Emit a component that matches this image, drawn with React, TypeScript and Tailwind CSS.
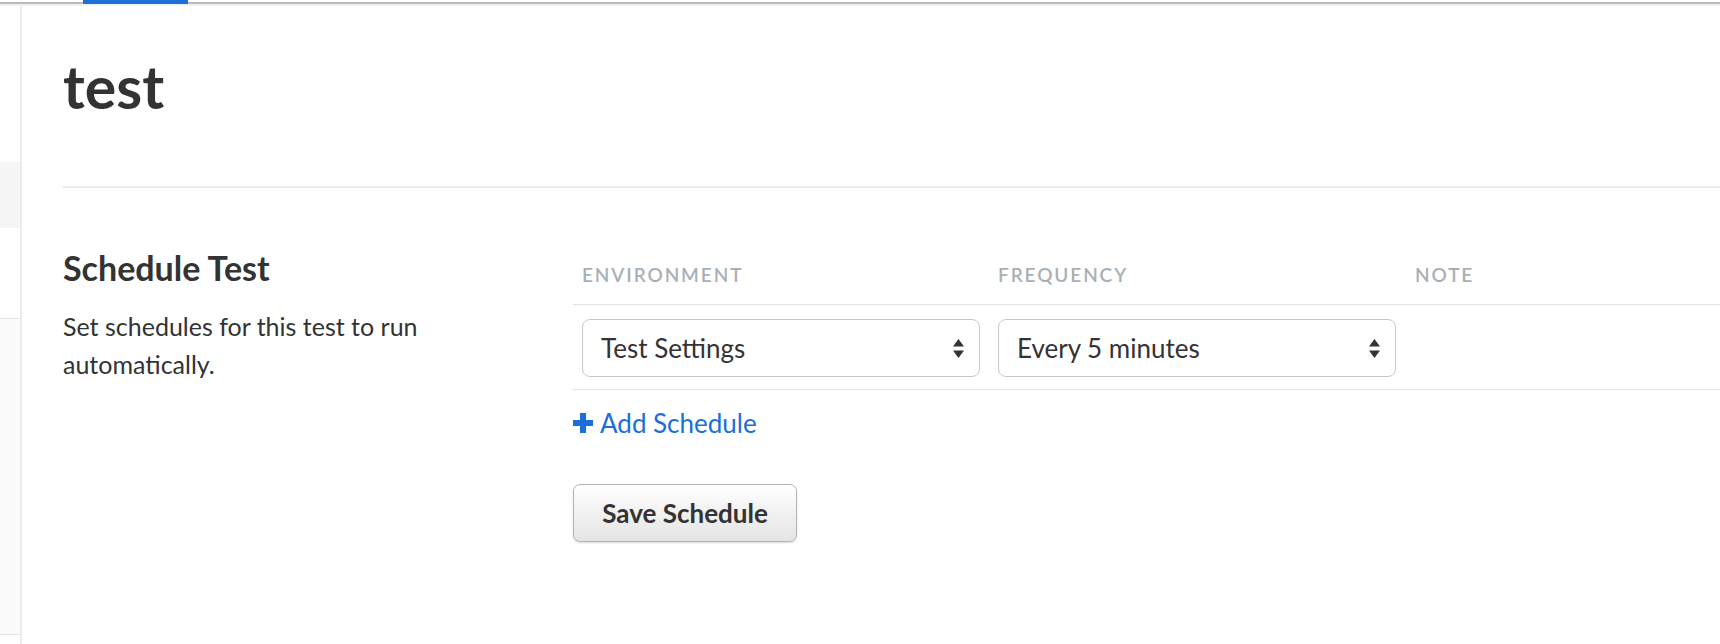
import { Fragment } from 'react';

const font = { fontFamily: 'Lato, "Open Sans", sans-serif' };

function SelectArrows() {
  return (
    <svg width="11" height="19" viewBox="0 0 11 19" className="shrink-0">
      <path d="M5.5 0 L11 7.5 L0 7.5 Z" fill="#333" />
      <path d="M0 11.5 L11 11.5 L5.5 19 Z" fill="#333" />
    </svg>
  );
}

function FakeSelect({ value }: { value: string }) {
  return (
    <div className="flex h-[58px] w-[398px] items-center justify-between rounded-[8px] border border-[#c8c8c8] bg-white pl-[18px] pr-[15px] text-[26px] text-[#333]">
      <span>{value}</span>
      <SelectArrows />
    </div>
  );
}

function PlusIcon() {
  return (
    <svg width="20" height="20" viewBox="0 0 20 20" className="mr-[7px] shrink-0">
      <path d="M7 0h6v7h7v6h-7v7H7v-7H0V7h7z" fill="#1a6fd8" />
    </svg>
  );
}

export default function App() {
  const columns = ['Environment', 'Frequency', 'Note'];
  const rows = [{ env: 'Test Settings', freq: 'Every 5 minutes', note: '' }];

  return (
    <div className="flex h-[644px] w-[1720px] flex-col overflow-hidden bg-white text-[#333]" style={font}>
      {/* top tab strip */}
      <div className="relative h-[6px] shrink-0">
        <div className="mt-[2px] h-[2px] bg-[#b5bcc0]" />
        <div className="h-[2px] bg-[#eef0f2]" />
        <div className="absolute left-[83px] top-0 h-[4px] w-[105px] bg-[#1a6fd8]" />
      </div>

      <div className="flex min-h-0 flex-1">
        {/* collapsed sidebar */}
        <div className="flex w-[22px] shrink-0 flex-col border-r-2 border-[#ebebeb]">
          <div className="h-[156px]" />
          <div className="h-[66px] bg-[#f5f5f5]" />
          <div className="h-[90px]" />
          <div className="h-[316px] border-t border-[#e4e4e4] bg-[#fbfbfb]" />
          <div className="flex-1 border-t border-[#e4e4e4]" />
        </div>

        {/* main */}
        <div className="min-w-0 flex-1 pl-[41px] pt-[46px]">
          <h1 className="text-[59px] font-bold leading-[70px] text-[#333]">test</h1>
          <div className="mt-[64px] h-[2px] bg-[#ebebeb]" />

          <div className="mt-[62px] grid grid-cols-[510px_1fr]">
            <div>
              <h2 className="-mt-[3px] text-[34px] font-bold leading-[42px]">Schedule Test</h2>
              <p className="mt-[18px] w-[440px] text-[25px] leading-[38px]">
                Set schedules for this test to run automatically.
              </p>
            </div>

            <div>
              <div className="grid grid-cols-[416px_417px_1fr] border-b border-[#e3e3e3] pb-[17px] pt-[13px]">
                {columns.map((c) => (
                  <div key={c} className="px-[9px] text-[19px] font-semibold uppercase leading-[24px] tracking-[0.1em] text-[#a9b0b5]">
                    {c}
                  </div>
                ))}
              </div>
              {rows.map((r, i) => (
                <Fragment key={i}>
                  <div className="grid grid-cols-[416px_417px_1fr] border-b border-[#e3e3e3] pb-[12px] pt-[14px]">
                    <div className="px-[9px]">
                      <FakeSelect value={r.env} />
                    </div>
                    <div className="px-[9px]">
                      <FakeSelect value={r.freq} />
                    </div>
                    <div className="px-[9px]">{r.note}</div>
                  </div>
                </Fragment>
              ))}

              <button className="mt-[17px] flex items-center text-[26px] leading-[32px] text-[#1a6fd8]">
                <PlusIcon />
                Add Schedule
              </button>

              <button className="mt-[45px] h-[58px] w-[224px] rounded-[7px] border border-[#b5b5b5] bg-gradient-to-b from-white to-[#e4e4e4] text-[26px] font-bold text-[#333] shadow-[0_1px_2px_rgba(0,0,0,0.15)]">
                Save Schedule
              </button>
            </div>
          </div>
        </div>
      </div>
    </div>
  );
}
